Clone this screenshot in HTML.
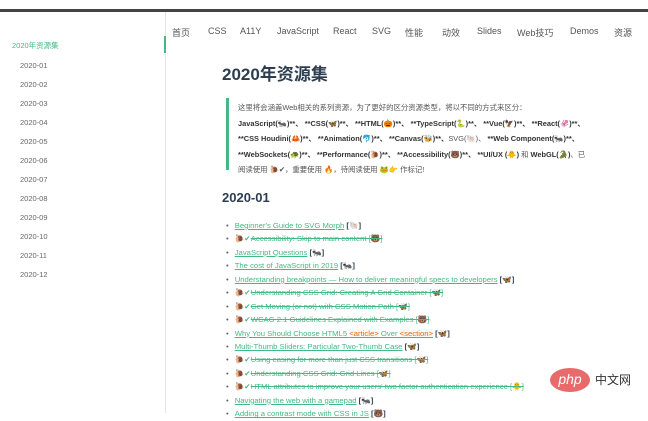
<!DOCTYPE html>
<html><head><meta charset="utf-8"><style>
body{margin:0;width:648px;height:413px;overflow:hidden;background:#fff;font-family:"Liberation Sans","Noto Sans CJK SC",sans-serif;position:relative}
.topbar{position:absolute;left:0;top:9px;width:648px;height:3px;background:#444}
.side{position:absolute;left:0;top:12px;width:165px;height:401px;border-right:1px solid #e4e4e4}
.side div{position:absolute;left:20px;font-size:7.5px;color:#666}
.side .a{left:12px;color:#42b983}
.ind{position:absolute;left:164px;top:36px;width:2px;height:17px;background:#42b983}
.nav{position:absolute;top:26px;font-size:9px;color:#555}
.nav span{position:absolute;white-space:nowrap}
h1{position:absolute;left:222px;top:60px;margin:0;font-size:17px;font-weight:bold;color:#2c3e50}
.bq{position:absolute;left:226px;top:98px;width:420px;height:72px;border-left:3px solid #42b983;padding-left:9px;font-size:7.4px;line-height:15.6px;color:#555;white-space:nowrap;box-sizing:border-box;padding-top:2px}
.bq b{color:#333}
h2{position:absolute;left:222px;top:190px;margin:0;font-size:13px;font-weight:bold;color:#2c3e50}
ul{position:absolute;left:226px;top:219px;margin:0;padding:0;list-style:none;font-size:7.7px;white-space:nowrap}
li{height:13.45px;line-height:13.45px;color:#42b983}
li:before{content:"•";color:#666;margin-right:6px}
li a{color:#42b983;text-decoration:underline}
li s{color:#42b983}
.t{color:#2c3e50;font-weight:bold}
.c{color:#e96900;background:#f8f8f8}
.wm{position:absolute;left:550px;top:368px;width:40px;height:24px;border-radius:50%;background:#e96a6a;color:#fff;font-size:14px;text-align:center;line-height:22px;font-style:italic}
.wm2{position:absolute;left:595px;top:371px;font-size:12px;color:#333}
</style></head><body>
<div class="topbar"></div>
<div class="side">
<div class="a" style="top:28px">2020年资源集</div>
<div style="top:49px">2020-01</div><div style="top:68px">2020-02</div><div style="top:87px">2020-03</div><div style="top:106px">2020-04</div><div style="top:125px">2020-05</div><div style="top:144px">2020-06</div><div style="top:163px">2020-07</div><div style="top:182px">2020-08</div><div style="top:201px">2020-09</div><div style="top:220px">2020-10</div><div style="top:239px">2020-11</div><div style="top:258px">2020-12</div>
</div>
<div class="ind"></div>
<div class="nav"><span style="left:172px">首页</span><span style="left:208px">CSS</span><span style="left:240px">A11Y</span><span style="left:277px">JavaScript</span><span style="left:333px">React</span><span style="left:372px">SVG</span><span style="left:405px">性能</span><span style="left:442px">动效</span><span style="left:477px">Slides</span><span style="left:517px">Web技巧</span><span style="left:570px">Demos</span><span style="left:614px">资源</span></div>
<h1>2020年资源集</h1>
<div class="bq">这里将会涵盖Web相关的系列资源，为了更好的区分资源类型，将以不同的方式来区分：<br>
<b>JavaScript(🐜)**、 **CSS(🦋)**、 **HTML(🎃)**、 **TypeScript(🐍)**、 **Vue(🦅)**、 **React(🦑)**、</b><br>
<b>**CSS Houdini(🦀)**、 **Animation(🐬)**、 **Canvas(🐝)**、</b>SVG(🐚)、 <b>**Web Component(🐜)**、</b><br>
<b>**WebSockets(🐢)**、 **Performance(🐌)**、 **Accessibility(🐻)**、 **UI/UX (🐥)</b> 和 <b>WebGL(🐊)</b>、已<br>
阅读使用 🐌✔，重要使用 🔥，待阅读使用 🐸👉 作标记!</div>
<h2>2020-01</h2>
<ul>
<li><a>Beginner's Guide to SVG Morph</a> <span class="t">[🐚]</span></li>
<li>🐌✔<s>Accessibility: Skip to main content [🐻]</s></li>
<li><a>JavaScript Questions</a> <span class="t">[🐜]</span></li>
<li><a>The cost of JavaScript in 2019</a> <span class="t">[🐜]</span></li>
<li><a>Understanding breakpoints — How to deliver meaningful specs to developers</a> <span class="t">[🦋]</span></li>
<li>🐌✔<s>Understanding CSS Grid: Creating A Grid Container [🦋]</s></li>
<li>🐌✔<s>Get Moving (or not) with CSS Motion Path [🦋]</s></li>
<li>🐌✔<s>WCAG 2.1 Guidelines Explained with Examples [🐻]</s></li>
<li><a>Why You Should Choose HTML5 <span class="c">&lt;article&gt;</span> Over <span class="c">&lt;section&gt;</span></a> <span class="t">[🦋]</span></li>
<li><a>Multi-Thumb Sliders: Particular Two-Thumb Case</a> <span class="t">[🦋]</span></li>
<li>🐌✔<s>Using easing for more than just CSS transitions [🦋]</s></li>
<li>🐌✔<s>Understanding CSS Grid: Grid Lines [🦋]</s></li>
<li>🐌✔<s>HTML attributes to improve your users' two factor authentication experience [🐥]</s></li>
<li><a>Navigating the web with a gamepad</a> <span class="t">[🐜]</span></li>
<li><a>Adding a contrast mode with CSS in JS</a> <span class="t">[🐻]</span></li>
</ul>
<div class="wm">php</div><div class="wm2">中文网</div>
</body></html>
